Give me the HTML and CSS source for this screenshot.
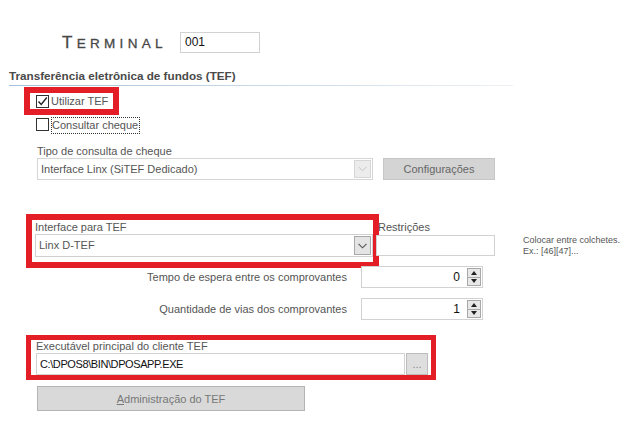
FILE: index.html
```html
<!DOCTYPE html>
<html lang="pt-BR">
<head>
  <meta charset="UTF-8">
  <title>Terminal - TEF</title>
  <link rel="stylesheet" href="styles.css">
</head>
<body>
  <div class="form">
    <div class="terminal">
      <span class="terminal-label">Terminal</span>
      <div class="terminal-input">001</div>
    </div>

    <h3 class="section-title">Transferência eletrônica de fundos (TEF)</h3>

    <div class="highlight hl-check">
      <label class="check">
        <span class="box">
          <svg width="11" height="11" viewBox="0 0 11 11"><polyline points="1.5,5.5 4.2,8.5 9.8,1.5" fill="none" stroke="#222" stroke-width="1.4"/></svg>
        </span>
        Utilizar TEF
      </label>
    </div>

    <label class="check check-plain">
      <span class="box"></span>
      <span class="focus">Consultar cheque</span>
    </label>

    <div class="field-cheque">
      <div class="label">Tipo de consulta de cheque</div>
      <div class="row">
        <div class="select select-disabled">
          <span class="select-text">Interface Linx (SiTEF Dedicado)</span>
          <span class="arrow">
            <svg width="9" height="6" viewBox="0 0 9 6"><polyline points="0.5,0.8 4.5,4.8 8.5,0.8" fill="none" stroke="#c4c4c4" stroke-width="1"/></svg>
          </span>
        </div>
        <button class="btn btn-config">Configurações</button>
      </div>
    </div>

    <div class="tef-row">
      <div class="highlight hl-tef">
        <div class="label">Interface para TEF</div>
        <div class="select select-tef">
          <span class="select-text">Linx D-TEF</span>
          <span class="arrow">
            <svg width="9" height="6" viewBox="0 0 9 6"><polyline points="0.5,0.8 4.5,4.8 8.5,0.8" fill="none" stroke="#555" stroke-width="1.1"/></svg>
          </span>
        </div>
      </div>
      <div class="restricoes">
        <div class="label">Restrições</div>
        <div class="text-input"></div>
      </div>
      <div class="note">
        Colocar entre colchetes.<br>
        Ex.: [46][47]...
      </div>
    </div>

    <div class="spin-row spin-first">
      <span class="spin-label">Tempo de espera entre os comprovantes</span>
      <div class="spinner">
        <span class="spin-value">0</span>
        <span class="spin-buttons">
          <span class="spin-up"></span>
          <span class="spin-down"></span>
        </span>
      </div>
    </div>

    <div class="spin-row">
      <span class="spin-label">Quantidade de vias dos comprovantes</span>
      <div class="spinner">
        <span class="spin-value">1</span>
        <span class="spin-buttons">
          <span class="spin-up"></span>
          <span class="spin-down"></span>
        </span>
      </div>
    </div>

    <div class="highlight hl-exe">
      <div class="label label-exe">Executável principal do cliente TEF</div>
      <div class="exe-row">
        <div class="exe-input">C:\DPOS8\BIN\DPOSAPP.EXE</div>
        <button class="btn btn-browse">...</button>
      </div>
    </div>

    <button class="btn btn-admin"><u>A</u>dministração do TEF</button>
  </div>
</body>
</html>
```

FILE: styles.css
```css
body {
  margin: 0;
  font-family: 'Liberation Sans', Arial, sans-serif;
  font-size: 11px;
  color: #555;
  background-color: #ffffff;
}
.form {
  width: 623px;
}
.terminal {
  display: flex;
  align-items: center;
  height: 21px;
  margin: 32px 0 0 62px;
}
.terminal-label {
  display: inline-block;
  width: 118px;
  font-size: 13.5px;
  text-transform: uppercase;
  letter-spacing: 4.3px;
  color: #474747;
  -webkit-text-stroke: 0.3px #474747;
}
.terminal-label::first-letter {
  font-size: 17px;
}
.terminal-input {
  width: 80px;
  height: 21px;
  box-sizing: border-box;
  border: 1px solid #d2d2d2;
  padding-left: 4px;
  font-size: 12px;
  line-height: 19px;
  color: #111;
}
.section-title {
  width: 504px;
  margin: 16px 0 0 9px;
  padding-bottom: 2px;
  font-size: 11.7px;
  font-weight: bold;
  line-height: 14px;
  color: #4a4a4a;
  border-bottom: 1px solid;
  border-image: linear-gradient(to right, #a3c0dc, #eef1f4) 1;
}
.highlight {
  box-sizing: border-box;
  border: 6px solid #e31e26;
}
.hl-check {
  width: 95px;
  height: 28px;
  margin: 1px 0 0 24px;
  padding: 2px 0 0 6px;
}
.check {
  display: flex;
  align-items: flex-start;
  gap: 2px;
  line-height: 13px;
  color: #555;
}
.box {
  width: 13px;
  height: 13px;
  box-sizing: border-box;
  border: 1px solid #333;
  background-color: #fff;
  display: flex;
  align-items: center;
  justify-content: center;
  flex-shrink: 0;
}
.check-plain {
  margin: 2px 0 0 36px;
}
.check-plain .box {
  margin-top: 1px;
}
.focus {
  border: 1px dotted #333;
  padding: 0 1px 0 0;
  line-height: 15px;
}
.label {
  line-height: 13px;
  color: #555;
}
.field-cheque {
  margin: 11px 0 0 37px;
}
.row {
  display: flex;
  gap: 10px;
}
.select {
  display: flex;
  box-sizing: border-box;
  width: 336px;
  height: 22px;
  padding: 1px;
  border: 1px solid #d5d5d5;
  background-color: #fff;
}
.select-text {
  flex: 1;
  padding-left: 2px;
  line-height: 18px;
  color: #555;
}
.arrow {
  width: 17px;
  box-sizing: border-box;
  display: flex;
  align-items: center;
  justify-content: center;
  border: 1px solid #d6d6d6;
  background-color: #ececec;
}
.btn {
  font-family: 'Liberation Sans', Arial, sans-serif;
  font-size: 11px;
  color: #666;
  background-color: #d4d4d4;
  border: 1px solid #c6c6c6;
  padding: 0;
  cursor: pointer;
}
.btn-config {
  width: 112px;
  height: 22px;
}
.tef-row {
  display: flex;
  align-items: flex-start;
  margin-top: 34px;
}
.hl-tef {
  width: 353px;
  height: 54px;
  margin-left: 26px;
  padding-left: 3px;
}
.hl-tef .label {
  line-height: 14px;
}
.select-tef {
  width: 338px;
  height: 23px;
  border-color: #d0d0d0;
}
.select-tef .select-text {
  line-height: 19px;
}
.select-tef .arrow {
  border-color: #a8a8a8;
  background-color: #e4e4e4;
}
.restricoes {
  width: 119px;
  margin-left: -3px;
  padding-top: 6px;
}
.restricoes .label {
  padding-left: 2px;
  line-height: 14px;
}
.text-input {
  height: 21px;
  margin-top: 1px;
  box-sizing: border-box;
  border: 1px solid #d2d2d2;
  background-color: #fff;
}
.note {
  margin-left: 28px;
  padding-top: 21px;
  font-size: 9px;
  line-height: 11px;
  color: #555;
  white-space: nowrap;
}
.spin-row {
  display: flex;
  align-items: center;
  height: 22px;
  margin-top: 10px;
}
.spin-first {
  margin-top: -2px;
}
.spin-label {
  width: 347px;
  text-align: right;
  color: #555;
}
.spinner {
  display: flex;
  box-sizing: border-box;
  width: 122px;
  height: 22px;
  margin-left: 14px;
  padding: 1px;
  border: 1px solid #d2d2d2;
  background-color: #fff;
}
.spin-value {
  flex: 1;
  padding-right: 7px;
  text-align: right;
  font-size: 12px;
  line-height: 18px;
  color: #111;
}
.spin-buttons {
  width: 14px;
  display: flex;
  flex-direction: column;
  border: 1px solid #a8a8a8;
  box-sizing: border-box;
}
.spin-up,
.spin-down {
  flex: 1;
  display: flex;
  align-items: center;
  justify-content: center;
  background-color: #e8e8e8;
}
.spin-up {
  border-bottom: 1px solid #a8a8a8;
}
.spin-up::before {
  content: '';
  border-left: 3px solid transparent;
  border-right: 3px solid transparent;
  border-bottom: 4px solid #222;
}
.spin-down::before {
  content: '';
  border-left: 3px solid transparent;
  border-right: 3px solid transparent;
  border-top: 4px solid #222;
}
.hl-exe {
  width: 410px;
  height: 45px;
  margin: 15px 0 0 26px;
  padding-left: 5px;
  border-width: 5px;
}
.label-exe {
  line-height: 13px;
}
.exe-row {
  display: flex;
  gap: 1px;
}
.exe-input {
  width: 369px;
  height: 22px;
  box-sizing: border-box;
  padding-left: 3px;
  border: 1px solid #d2d2d2;
  line-height: 20px;
  letter-spacing: -0.4px;
  color: #111;
}
.btn-browse {
  width: 22px;
  height: 22px;
  background-color: #dedede;
  border-color: #bcbcbc;
  color: #888;
}
.btn-admin {
  display: block;
  width: 268px;
  height: 25px;
  margin: 6px 0 0 37px;
  background-color: #d9d9d9;
  border-color: #b4b4b4;
  color: #777;
}
```
